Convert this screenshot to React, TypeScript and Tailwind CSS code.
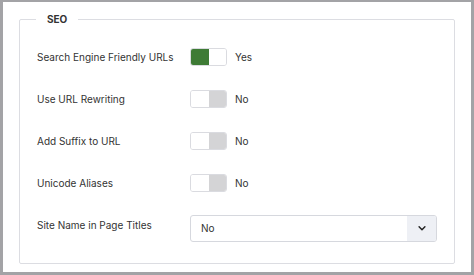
import React from "react";

type Row = { label: string; on: boolean };

const rows: Row[] = [
  { label: "Search Engine Friendly URLs", on: true },
  { label: "Use URL Rewriting", on: false },
  { label: "Add Suffix to URL", on: false },
  { label: "Unicode Aliases", on: false },
];

const Toggle = ({ on }: { on: boolean }) => (
  <div className="flex items-center gap-[8px]">
    <div className="flex h-[18px] w-[37px] overflow-hidden rounded-[3px] border border-[#dadbe0] bg-white">
      <div className={on ? "w-1/2 bg-[#3e7b35]" : "w-1/2 bg-white"} />
      <div className={on ? "w-1/2 bg-white" : "w-1/2 bg-[#d4d4d6]"} />
    </div>
    <span className="text-[10px] text-[#333]">{on ? "Yes" : "No"}</span>
  </div>
);

export default function App() {
  return (
    <div className="h-[275px] w-[474px] border-b-[3px] border-l-[3px] border-r-[3px] border-t-2 border-[#a3a3a6] bg-white font-['Inter','Roboto',sans-serif]">
      <fieldset className="mx-[16px] mt-[10px] h-[252px] rounded-[2px] border border-[#dcdde2] px-[16px]">
        <legend className="px-[11px] text-[10px] font-bold text-[#333]">SEO</legend>
        <div className="flex flex-col pt-[9px]">
          {rows.map((r) => (
            <div key={r.label} className="flex h-[42px] items-center">
              <div className="w-[154px] whitespace-nowrap pl-[1px] text-[10px] text-[#333]">{r.label}</div>
              <Toggle on={r.on} />
            </div>
          ))}
          <div className="flex h-[42px] items-center">
            <div className="w-[154px] whitespace-nowrap pl-[1px] text-[10px] text-[#333]">Site Name in Page Titles</div>
            <div className="mt-[6px] flex h-[27px] w-[247px] overflow-hidden rounded-[3px] border border-[#d6d8de]">
              <div className="flex flex-1 items-center pl-[10px] text-[10px] text-[#333]">No</div>
              <div className="flex w-[29px] items-center justify-center bg-[#eef0f5]">
                <svg width="10" height="10" viewBox="0 0 24 24" fill="none" stroke="#222" strokeWidth="3.5" strokeLinecap="round" strokeLinejoin="round">
                  <path d="M5 9l7 7 7-7" />
                </svg>
              </div>
            </div>
          </div>
        </div>
      </fieldset>
    </div>
  );
}
